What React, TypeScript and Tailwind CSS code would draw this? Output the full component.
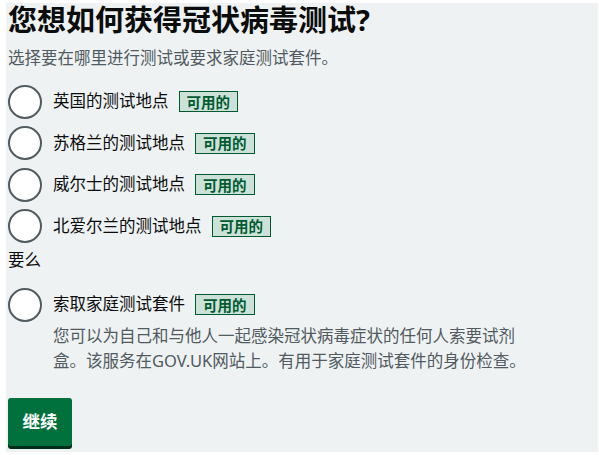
import React from "react";

const font = { fontFamily: '"Noto Sans", "Noto Sans CJK SC", sans-serif' };

function Tag() {
  return (
    <span className="ml-[10px] inline-flex h-[21px] items-center border border-[#005a30] bg-[#cce2d8] px-[7px] text-[14.5px] font-bold leading-none text-[#005a30]">
      可用的
    </span>
  );
}

function Radio({ label }: { label: string }) {
  return (
    <div className="flex h-[41.5px] items-center">
      <span className="h-[34px] w-[34px] shrink-0 rounded-full border-2 border-[#505a5f] bg-white" />
      <span className="ml-[11px] text-[16.5px] text-[#0b0c0c]">{label}</span>
      <Tag />
    </div>
  );
}

export default function App() {
  return (
    <div className="min-h-screen bg-white" style={font}>
      <div className="ml-[6px] mt-[3px] h-[449px] w-[592px] bg-[#eef2f3] pl-[2px]">
        <h1 className="text-[29px] font-bold leading-[34px] text-[#0b0c0c]">
          您想如何获得冠状病毒测试?
        </h1>
        <p className="mt-[9px] text-[16.5px] leading-[24px] text-[#505a5f]">
          选择要在哪里进行测试或要求家庭测试套件。
        </p>
        <div className="mt-[11px]">
          <Radio label="英国的测试地点" />
          <Radio label="苏格兰的测试地点" />
          <Radio label="威尔士的测试地点" />
          <Radio label="北爱尔兰的测试地点" />
        </div>
        <p className="mt-[1px] text-[16.5px] leading-[24px] text-[#0b0c0c]">要么</p>
        <div className="mt-[12px]">
          <Radio label="索取家庭测试套件" />
          <p className="ml-[45px] mt-[-3px] w-[480px] text-[16.5px] leading-[25px] text-[#505a5f]">
            您可以为自己和与他人一起感染冠状病毒症状的任何人索要试剂盒。该服务在GOV.UK网站上。有用于家庭测试套件的身份检查。
          </p>
        </div>
        <button className="mt-[25px] h-[48px] w-[64px] rounded-[3px] bg-[#00703c] text-[17.5px] font-bold text-white shadow-[0_3px_0_#002d18]">
          继续
        </button>
      </div>
    </div>
  );
}
